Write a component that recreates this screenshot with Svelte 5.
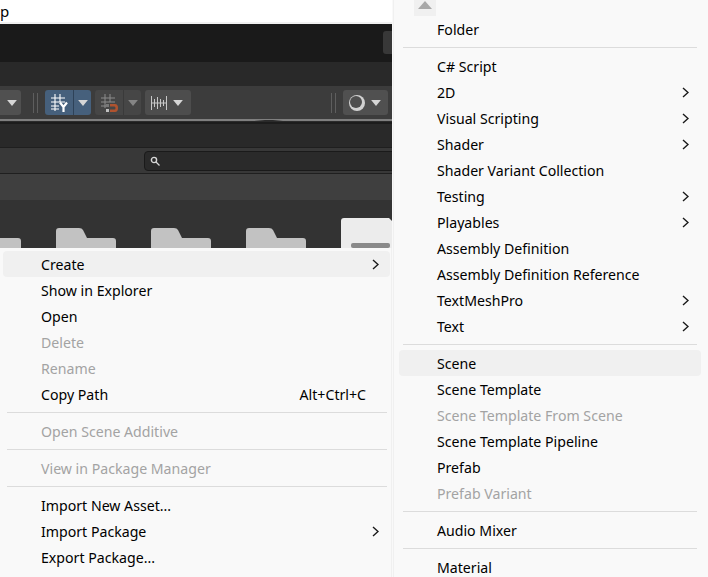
<script>
  const leftMenu = [
    { t: 'Create', sub: true, hot: true },
    { t: 'Show in Explorer' },
    { t: 'Open' },
    { t: 'Delete', off: true },
    { t: 'Rename', off: true },
    { t: 'Copy Path', key: 'Alt+Ctrl+C' },
    { sep: true },
    { t: 'Open Scene Additive', off: true },
    { sep: true },
    { t: 'View in Package Manager', off: true },
    { sep: true },
    { t: 'Import New Asset...' },
    { t: 'Import Package', sub: true },
    { t: 'Export Package...' }
  ];
  const rightMenu = [
    { t: 'Folder' },
    { sep: true },
    { t: 'C# Script' },
    { t: '2D', sub: true },
    { t: 'Visual Scripting', sub: true },
    { t: 'Shader', sub: true },
    { t: 'Shader Variant Collection' },
    { t: 'Testing', sub: true },
    { t: 'Playables', sub: true },
    { t: 'Assembly Definition' },
    { t: 'Assembly Definition Reference' },
    { t: 'TextMeshPro', sub: true },
    { t: 'Text', sub: true },
    { sep: true },
    { t: 'Scene', hot: true },
    { t: 'Scene Template' },
    { t: 'Scene Template From Scene', off: true },
    { t: 'Scene Template Pipeline' },
    { t: 'Prefab' },
    { t: 'Prefab Variant', off: true },
    { sep: true },
    { t: 'Audio Mixer' },
    { sep: true },
    { t: 'Material' }
  ];
</script>

{#snippet caret(cls)}
  <svg class="caret {cls}" viewBox="0 0 13 8" width="13" height="8"><path d="M0 0H13L6.5 8Z" /></svg>
{/snippet}

{#snippet folder()}
  <svg class="folder" viewBox="0 0 60 50" width="60" height="50"><path d="M3 0H23Q26 0 27 2L31 10H57Q60 10 60 13V50H0V3Q0 0 3 0Z" fill="#c2c2c2" /></svg>
{/snippet}

{#snippet items(list)}
  {#each list as it}
    {#if it.sep}
      <div class="sep"></div>
    {:else}
      <div class="item" class:hot={it.hot} class:off={it.off}>
        <span>{it.t}</span>
        {#if it.key}<span class="key">{it.key}</span>{/if}
        {#if it.sub}
          <svg class="chev" viewBox="0 0 7 11" width="7" height="11"><path d="M1 1L6 5.5L1 10" /></svg>
        {/if}
      </div>
    {/if}
  {/each}
{/snippet}

<div class="screen">
  <div class="editor">
    <div class="titlebar"><span>p</span></div>
    <div class="titleedge"></div>
    <div class="tabs"><div class="tabbtn"></div></div>
    <div class="strip"></div>
    <div class="toolbar">
      <div class="btn partial">{@render caret('')}</div>
      <div class="grip"></div>
      <div class="split blue">
        <div class="seg main">
          <svg viewBox="0 0 18 18" width="18" height="18" fill="none" stroke="#fff" stroke-width="1.1">
            <path d="M5 0V17M10 0V8M1 4H15M1 8H15M1 12H9M1 15H9" />
            <path d="M10 8.5L13.5 13L17 8.5M13.5 13V18" stroke-width="2.2" />
          </svg>
        </div>
        <div class="seg arrow">{@render caret('')}</div>
      </div>
      <div class="split dim">
        <div class="seg main">
          <svg viewBox="0 0 18 18" width="18" height="18" fill="none">
            <path d="M5 0V14M10 0V8M1 4H15M1 8H15M1 12H8" stroke="#8c8c8c" stroke-width="1" />
            <rect x="6" y="10" width="3" height="3" fill="#777" />
            <rect x="6" y="15" width="3" height="3" fill="#c0c0c0" />
            <path d="M10 10H15Q18 10 18 14Q18 18 15 18H10V15.5H14.5Q15.5 15.5 15.5 14Q15.5 12.5 14.5 12.5H10Z" fill="#b0532f" />
          </svg>
        </div>
        <div class="seg arrow">{@render caret('faded')}</div>
      </div>
      <div class="btn ruler">
        <svg viewBox="0 0 18 16" width="18" height="16" fill="none" stroke="#c8c8c8" stroke-width="1">
          <path d="M1.5 1V15M16.5 1V15M4.5 4V12M7.5 2V14M10.5 4V12M13.5 5V11M1 8H17" />
        </svg>
        {@render caret('')}
      </div>
      <div class="grow"></div>
      <div class="grip"></div>
      <div class="btn orbit">
        <svg viewBox="0 0 18 18" width="18" height="18">
          <circle cx="9" cy="9" r="8" fill="#d2d2d2" />
          <circle cx="8" cy="8" r="6" fill="#4f4f4f" />
        </svg>
        {@render caret('')}
      </div>
    </div>
    <div class="rule">
      <svg class="wedge" viewBox="0 0 48 3" width="48" height="3"><path d="M0 3L20 1H28L48 3Z" fill="#2a2a2a" /></svg>
    </div>
    <div class="ruledark"></div>
    <div class="panelhead"></div>
    <div class="searchrow">
      <div class="search">
        <svg viewBox="0 0 10 10" width="10" height="10" fill="none" stroke="#d8d8d8">
          <circle cx="4" cy="4" r="2.6" stroke-width="1.4" />
          <path d="M6 6L9.5 9.5" stroke-width="1.3" />
        </svg>
      </div>
    </div>
    <div class="crumbs"></div>
    <div class="assets">
      {@render folder()}
      {@render folder()}
      {@render folder()}
      {@render folder()}
      <svg class="file" viewBox="0 0 60 40" width="60" height="40">
        <path d="M3 0H48L60 12V40H0V3Q0 0 3 0Z" fill="#ececec" />
        <rect x="10" y="25" width="39" height="5" rx="2" fill="#8a8a8a" />
      </svg>
    </div>
  </div>

  <div class="menu left">{@render items(leftMenu)}</div>

  <div class="menu right">
    <div class="scrollup"><svg viewBox="0 0 14 8" width="14" height="8"><path d="M7 0L14 8H0Z" fill="#a8a8a8" /></svg></div>
    {@render items(rightMenu)}
  </div>
</div>

<style>
  :global(body) { margin: 0; }
  .screen {
    position: relative;
    width: 708px;
    height: 577px;
    overflow: hidden;
    background: #f9f9f9;
    font-family: "Noto Sans", "Open Sans", sans-serif;
  }
  .editor {
    width: 392px;
    height: 577px;
    overflow: hidden;
    display: flex;
    flex-direction: column;
    background: #333;
  }
  .titlebar {
    height: 22px;
    flex: none;
    background: #fff;
    font-size: 15px;
    line-height: 22px;
    color: #000;
  }
  .titlebar span { display: block; }
  .titleedge { height: 2px; flex: none; background: #f0f0f0; }
  .tabs {
    height: 38px;
    flex: none;
    background: #1a1a1a;
    display: flex;
    justify-content: flex-end;
    align-items: flex-start;
    padding-top: 7px;
    box-sizing: border-box;
  }
  .tabbtn { width: 9px; height: 23px; background: #383838; border-radius: 3px 0 0 3px; }
  .strip { height: 24px; flex: none; background: #292929; }
  .toolbar {
    height: 33px;
    flex: none;
    box-sizing: border-box;
    background: #3c3c3c;
    display: flex;
    align-items: center;
    padding: 0 4px 0 0;
  }
  .btn, .split {
    height: 25px;
    border-radius: 3px;
    display: flex;
    align-items: center;
    background: #505050;
    flex: none;
  }
  .partial { width: 21px; justify-content: flex-end; padding-right: 4px; box-sizing: border-box; border-radius: 0 3px 3px 0; }
  .grip {
    width: 3px;
    height: 20px;
    flex: none;
    border-left: 1px solid #5e5e5e;
    border-right: 1px solid #5e5e5e;
    margin: 0 7px 0 12px;
  }
  .split { width: 46px; }
  .split .seg { height: 100%; display: flex; align-items: center; justify-content: center; box-sizing: border-box; }
  .split .main { width: 28px; }
  .split .arrow { width: 18px; border-left: 1px solid #3a3a3a; }
  .blue { background: #46607c; margin-right: 4px; }
  .blue .arrow { border-left-color: #2e4258; }
  .dim { background: #464646; margin-right: 4px; }
  .dim .arrow { border-left-color: #3a3a3a; }
  .ruler { width: 46px; padding-left: 5px; box-sizing: border-box; gap: 5px; background: #4d4d4d; }
  .orbit { width: 45px; padding-left: 5px; box-sizing: border-box; gap: 5px; }
  .grow { flex: 1; }
  .caret { flex: none; width: 10px; height: 6px; }
  .caret path { fill: #d6d6d6; }
  .caret.faded path { fill: #858585; }
  .rule { height: 3px; flex: none; background: #7f7f7f; border-bottom: 1px solid #2b2b2b; box-sizing: border-box; position: relative; }
  .wedge { position: absolute; left: 245px; top: 0; display: block; }
  .ruledark { height: 2px; flex: none; background: #1c1c1c; }
  .panelhead { height: 24px; flex: none; background: #292929; border-bottom: 1px solid #1f1f1f; box-sizing: border-box; }
  .searchrow {
    height: 26px;
    flex: none;
    background: #383838;
    border-bottom: 1px solid #1f1f1f;
    box-sizing: border-box;
    display: flex;
    align-items: center;
    padding-left: 144px;
  }
  .search {
    flex: 1;
    height: 20px;
    margin-right: -6px;
    background: #2a2a2a;
    border: 1px solid #1a1a1a;
    border-radius: 4px;
    box-sizing: border-box;
    display: flex;
    align-items: center;
    padding-left: 5px;
  }
  .crumbs { height: 26px; flex: none; background: #3f3f3f; }
  .assets {
    flex: 1;
    display: flex;
    align-items: flex-start;
    gap: 35px;
    margin-left: -39px;
    padding-top: 28px;
  }
  .folder { flex: none; display: block; }
  .file { flex: none; display: block; margin-top: -10px; }

  .menu { position: absolute; background: #f9f9f9; box-sizing: border-box; font-size: 14.15px; color: #000; }
  .menu.left { left: 0; top: 248px; width: 392px; height: 329px; padding: 3px 1px 0 3px; border-right: 1px solid #f0f0f0; }
  .menu.right { left: 393px; top: 0; width: 315px; height: 577px; padding: 16px 7px 0 5px; border-left: 1px solid #f0f0f0; }
  .item {
    height: 26px;
    display: flex;
    align-items: center;
    padding-left: 38px;
    border-radius: 4px;
    position: relative;
    white-space: nowrap;
    padding-top: 1px;
    box-sizing: border-box;
  }
  .item.hot { background: #f0f0f0; }
  .item.off { color: #a3a3a3; }
  .key { position: absolute; right: 24px; }
  .chev { position: absolute; right: 11px; top: 8px; fill: none; stroke: #1a1a1a; stroke-width: 1.4; }
  .menu.right .chev { right: 12px; }
  .sep { height: 1px; background: #dcdcdc; margin: 5px 3px 5px 4px; }
  .menu.right .sep { margin-right: 4px; }
  .scrollup {
    position: absolute;
    left: 20px;
    top: 0;
    width: 22px;
    height: 16px;
    background: #f0f0f0;
    display: flex;
    align-items: flex-start;
    justify-content: center;
    padding-top: 1px;
    box-sizing: border-box;
  }
</style>
